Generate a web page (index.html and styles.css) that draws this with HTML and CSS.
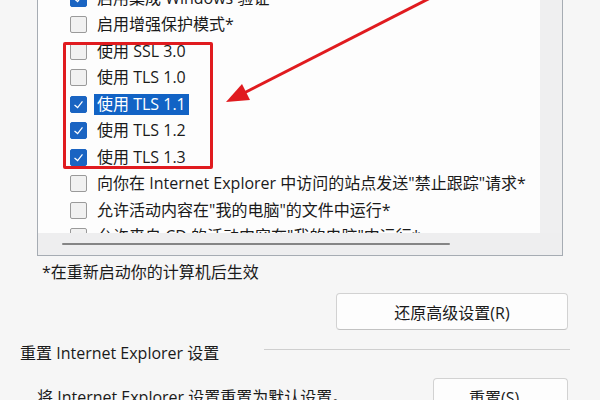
FILE: index.html
```html
<!DOCTYPE html>
<html lang="zh-CN">
<head>
    <meta charset="UTF-8">
    <title>Internet 选项 - 高级</title>
    <link rel="stylesheet" href="styles.css">
</head>
<body>
    <div class="page">
        <div class="listbox">
            <div class="list-view">
                <div class="row"><span class="box checked"><svg viewBox="0 0 17 17"><polyline points="4,9 7.5,12 13,5"/></svg></span><span class="label">启用集成 Windows 验证</span></div>
                <div class="row"><span class="box"></span><span class="label">启用增强保护模式*</span></div>
                <div class="row"><span class="box"></span><span class="label">使用 SSL 3.0</span></div>
                <div class="row"><span class="box"></span><span class="label">使用 TLS 1.0</span></div>
                <div class="row"><span class="box checked"><svg viewBox="0 0 17 17"><polyline points="4,9 7.5,12 13,5"/></svg></span><span class="label selected">使用 TLS 1.1</span></div>
                <div class="row"><span class="box checked"><svg viewBox="0 0 17 17"><polyline points="4,9 7.5,12 13,5"/></svg></span><span class="label">使用 TLS 1.2</span></div>
                <div class="row"><span class="box checked"><svg viewBox="0 0 17 17"><polyline points="4,9 7.5,12 13,5"/></svg></span><span class="label">使用 TLS 1.3</span></div>
                <div class="row"><span class="box"></span><span class="label">向你在 Internet Explorer 中访问的站点发送"禁止跟踪"请求*</span></div>
                <div class="row"><span class="box"></span><span class="label">允许活动内容在"我的电脑"的文件中运行*</span></div>
                <div class="row"><span class="box"></span><span class="label">允许来自 CD 的活动内容在"我的电脑"中运行*</span></div>
            </div>
            <div class="vscroll"></div>
            <div class="hscroll"><div class="thumb"></div></div>
            <div class="corner"></div>
        </div>

        <p class="note">*在重新启动你的计算机后生效</p>

        <div class="restore-row">
            <button class="btn btn-wide">还原高级设置(R)</button>
        </div>

        <div class="group-head">
            <span class="group-title">重置 Internet Explorer 设置</span>
            <span class="group-line"></span>
        </div>

        <div class="reset-row">
            <span class="reset-text">将 Internet Explorer 设置重置为默认设置。</span>
            <button class="btn btn-reset">重置(S)...</button>
        </div>

        <!-- annotation drawn over the screenshot -->
        <div class="mark-box"></div>
        <svg class="mark-arrow" width="600" height="400" viewBox="0 0 600 400">
            <line x1="440" y1="-7" x2="244" y2="93"/>
            <polygon points="226,102 250,100 242,84"/>
        </svg>
    </div>
</body>
</html>
```

FILE: styles.css
```css
html, body { margin: 0; padding: 0; }
body { background: #f6f6f6; font-family: "Open Sans", "Noto Sans CJK SC", sans-serif; font-size: 16px; color: #1a1a1a; }
.page { position: relative; width: 600px; height: 400px; overflow: hidden; }

.listbox { display: grid; grid-template-columns: 1fr 22px; grid-template-rows: 248px 22px; width: 524px; margin: -18px 0 0 37px; padding-top: 2px; border: 1px solid #a6acb3; background: #fdfdfd; }
.list-view { overflow: hidden; }
.row { display: flex; align-items: center; height: 26.5px; padding-left: 32px; white-space: nowrap; }
.box { flex: none; width: 15px; height: 15px; border: 1px solid #9a9a9a; border-radius: 2px; background: #f1f1f1; }
.box.checked { border-color: #1a64c2; background: #1a64c2; }
.box svg { display: block; width: 15px; height: 15px; }
.box polyline { fill: none; stroke: #fff; stroke-width: 1.4; }
.label { margin-left: 7px; padding: 0 3px; line-height: 21px; }
.label.selected { background: #1263c5; color: #fff; }

.vscroll { grid-row: 1; grid-column: 2; background: #efeff0; margin-top: -2px; }
.hscroll { grid-row: 2; grid-column: 1; display: flex; align-items: center; background: #eeeeef; }
.thumb { width: 388px; height: 2px; margin-left: 24px; border-radius: 1px; background: #858585; }
.corner { grid-row: 2; grid-column: 2; background: #eeeeef; }

.note { margin: 6px 0 0 42px; line-height: 20px; font-size: 16px; }

.restore-row { display: flex; justify-content: flex-end; padding-right: 32px; margin-top: 11px; }
.btn { font-family: inherit; font-size: 16px; color: #1a1a1a; background: #fdfdfd; border: 1px solid #d2d2d2; border-bottom-color: #c2c2c2; border-radius: 4px; }
.btn-wide { width: 232px; height: 37px; }

.group-head { display: flex; align-items: center; margin-top: 12px; padding-left: 20px; height: 20px; }
.group-line { flex: 1; height: 1px; margin: -6px 30px 0 45px; background: #cfcfcf; }

.reset-row { display: flex; justify-content: space-between; align-items: flex-start; margin-top: 16px; padding: 0 32px 0 37px; }
.reset-text { margin-top: 9px; line-height: 20px; }
.btn-reset { width: 135px; height: 37px; }

.mark-box { position: absolute; left: 63px; top: 42px; width: 144px; height: 121px; border: 3px solid #e01b1f; border-radius: 2px; }
.mark-arrow { position: absolute; left: 0; top: 0; }
.mark-arrow line { stroke: #e01b1f; stroke-width: 3; }
.mark-arrow polygon { fill: #e01b1f; }
```
